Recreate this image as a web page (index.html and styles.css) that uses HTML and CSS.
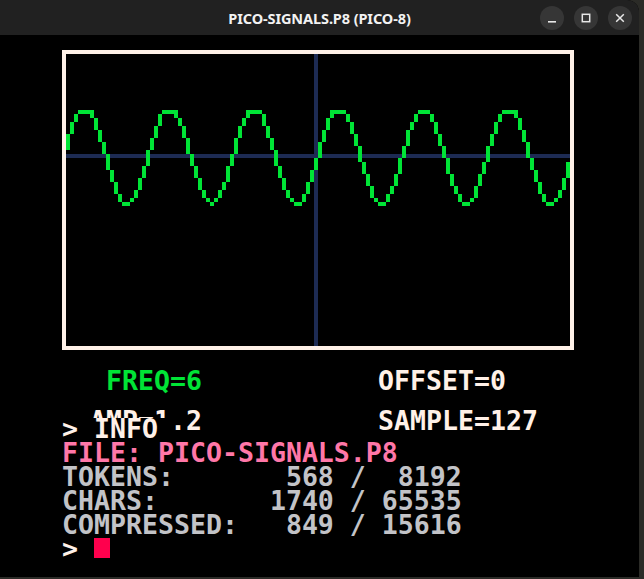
FILE: index.html
```
<!DOCTYPE html>
<html lang="en">
<head>
<meta charset="utf-8">
<title>PICO-SIGNALS.P8 (PICO-8)</title>
<link rel="stylesheet" href="styles.css">
</head>
<body>
<div class="desktop">
  <div class="window">
    <header class="titlebar">
      <span class="spacer"></span>
      <span class="title">PICO-SIGNALS.P8 (PICO-8)</span>
      <div class="controls">
        <span class="ctl"><svg viewBox="0 0 24 24" width="24" height="24"><rect x="8" y="15" width="8" height="1.6" fill="#e8e8e8"/></svg></span>
        <span class="ctl"><svg viewBox="0 0 24 24" width="24" height="24"><rect x="8.3" y="8.3" width="7.4" height="7.4" fill="none" stroke="#e8e8e8" stroke-width="1.5"/></svg></span>
        <span class="ctl"><svg viewBox="0 0 24 24" width="24" height="24"><path d="M8.2 8.2l7.6 7.6M15.8 8.2l-7.6 7.6" stroke="#e8e8e8" stroke-width="1.5" fill="none"/></svg></span>
      </div>
    </header>
    <main class="content">
      <svg class="screen" viewBox="0 0 128 128" width="512" height="512" shape-rendering="crispEdges">
        <path class="frame" fill-rule="evenodd" d="M0 0h128v75H0z M1 1v73h126V1z"/>
        <rect class="axis" x="1" y="26" width="126" height="1"/>
        <rect class="axis" x="63" y="1" width="1" height="73"/>
        <path id="wave" class="wave" d=""/>
        <text class="p8 green" x="11" y="85" xml:space="preserve">FREQ=6</text>
        <text class="p8 white" x="79" y="85" xml:space="preserve">OFFSET=0</text>
        <text class="p8 white" x="7" y="95" xml:space="preserve">AMP=1.2</text>
        <text class="p8 white" x="79" y="95" xml:space="preserve">SAMPLE=127</text>
        <rect class="clear" x="0" y="92" width="28" height="6"/>
        <text class="p8 white" x="0" y="97" xml:space="preserve">&gt; INFO</text>
        <text class="p8 pink" x="0" y="103" xml:space="preserve">FILE: PICO-SIGNALS.P8</text>
        <text class="p8 gray" x="0" y="109" xml:space="preserve">TOKENS:       568 /  8192</text>
        <text class="p8 gray" x="0" y="115" xml:space="preserve">CHARS:       1740 / 65535</text>
        <text class="p8 gray" x="0" y="121" xml:space="preserve">COMPRESSED:   849 / 15616</text>
        <text class="p8 white" x="0" y="127" xml:space="preserve">&gt;</text>
        <rect class="cursor" x="8" y="122" width="4" height="5"/>
      </svg>
    </main>
  </div>
</div>
<script src="script.js"></script>
</body>
</html>
```
FILE: styles.css
```
html, body {
  margin: 0;
  padding: 0;
  background: #2b2b27;
}
.desktop {
  width: 644px;
  height: 579px;
  overflow: hidden;
}
.window {
  width: 639px;
  height: 577px;
  display: flex;
  flex-direction: column;
  background: #000;
  border-top-right-radius: 12px;
  overflow: hidden;
}
.titlebar {
  height: 35px;
  flex: none;
  background: #212121;
  display: grid;
  grid-template-columns: 1fr auto 1fr;
  align-items: center;
}
.title {
  font-family: "Noto Sans", "DejaVu Sans", sans-serif;
  font-weight: 700;
  font-size: 14.5px;
  color: #f2f2f2;
  letter-spacing: -0.1px;
  padding-top: 1px;
}
.controls {
  justify-self: end;
  display: flex;
  gap: 10px;
  padding-right: 7px;
}
.ctl {
  width: 24px;
  height: 24px;
  border-radius: 50%;
  background: #363636;
  display: block;
}
.ctl svg {
  display: block;
}
.content {
  flex: 1;
  background: #000;
  padding: 15px 0 0 62px;
}
.screen {
  display: block;
  overflow: visible;
}
.frame { fill: #fff1e8; }
.axis { fill: #1d2b53; }
.wave { fill: #00e436; }
.cursor { fill: #ff004d; }
.clear { fill: #000; }
.p8 {
  font-family: "DejaVu Sans Mono", monospace;
  font-weight: 700;
  font-size: 6.644px;
  white-space: pre;
}
.green { fill: #00e436; }
.white { fill: #fff1e8; }
.pink { fill: #ff77a8; }
.gray { fill: #c2c3c7; }
```
FILE: script.js
```
(function () {
  var f = function (x) { return 26.5 - 12 * Math.sin(2 * Math.PI * 6 * x / 127); };
  var d = "";
  for (var c = 1; c <= 126; c++) {
    var lo = 1e9, hi = -1e9;
    for (var i = 0; i <= 20; i++) {
      var v = f(c - 0.5 + i / 20);
      if (v < lo) lo = v;
      if (v > hi) hi = v;
    }
    var top = Math.floor(lo + 0.5), bot = Math.floor(hi - 0.5);
    if (bot < top) { top = bot = Math.round(f(c)); }
    d += "M" + c + " " + top + "h1v" + (bot - top + 1) + "h-1z";
  }
  document.getElementById("wave").setAttribute("d", d);
})();
```
